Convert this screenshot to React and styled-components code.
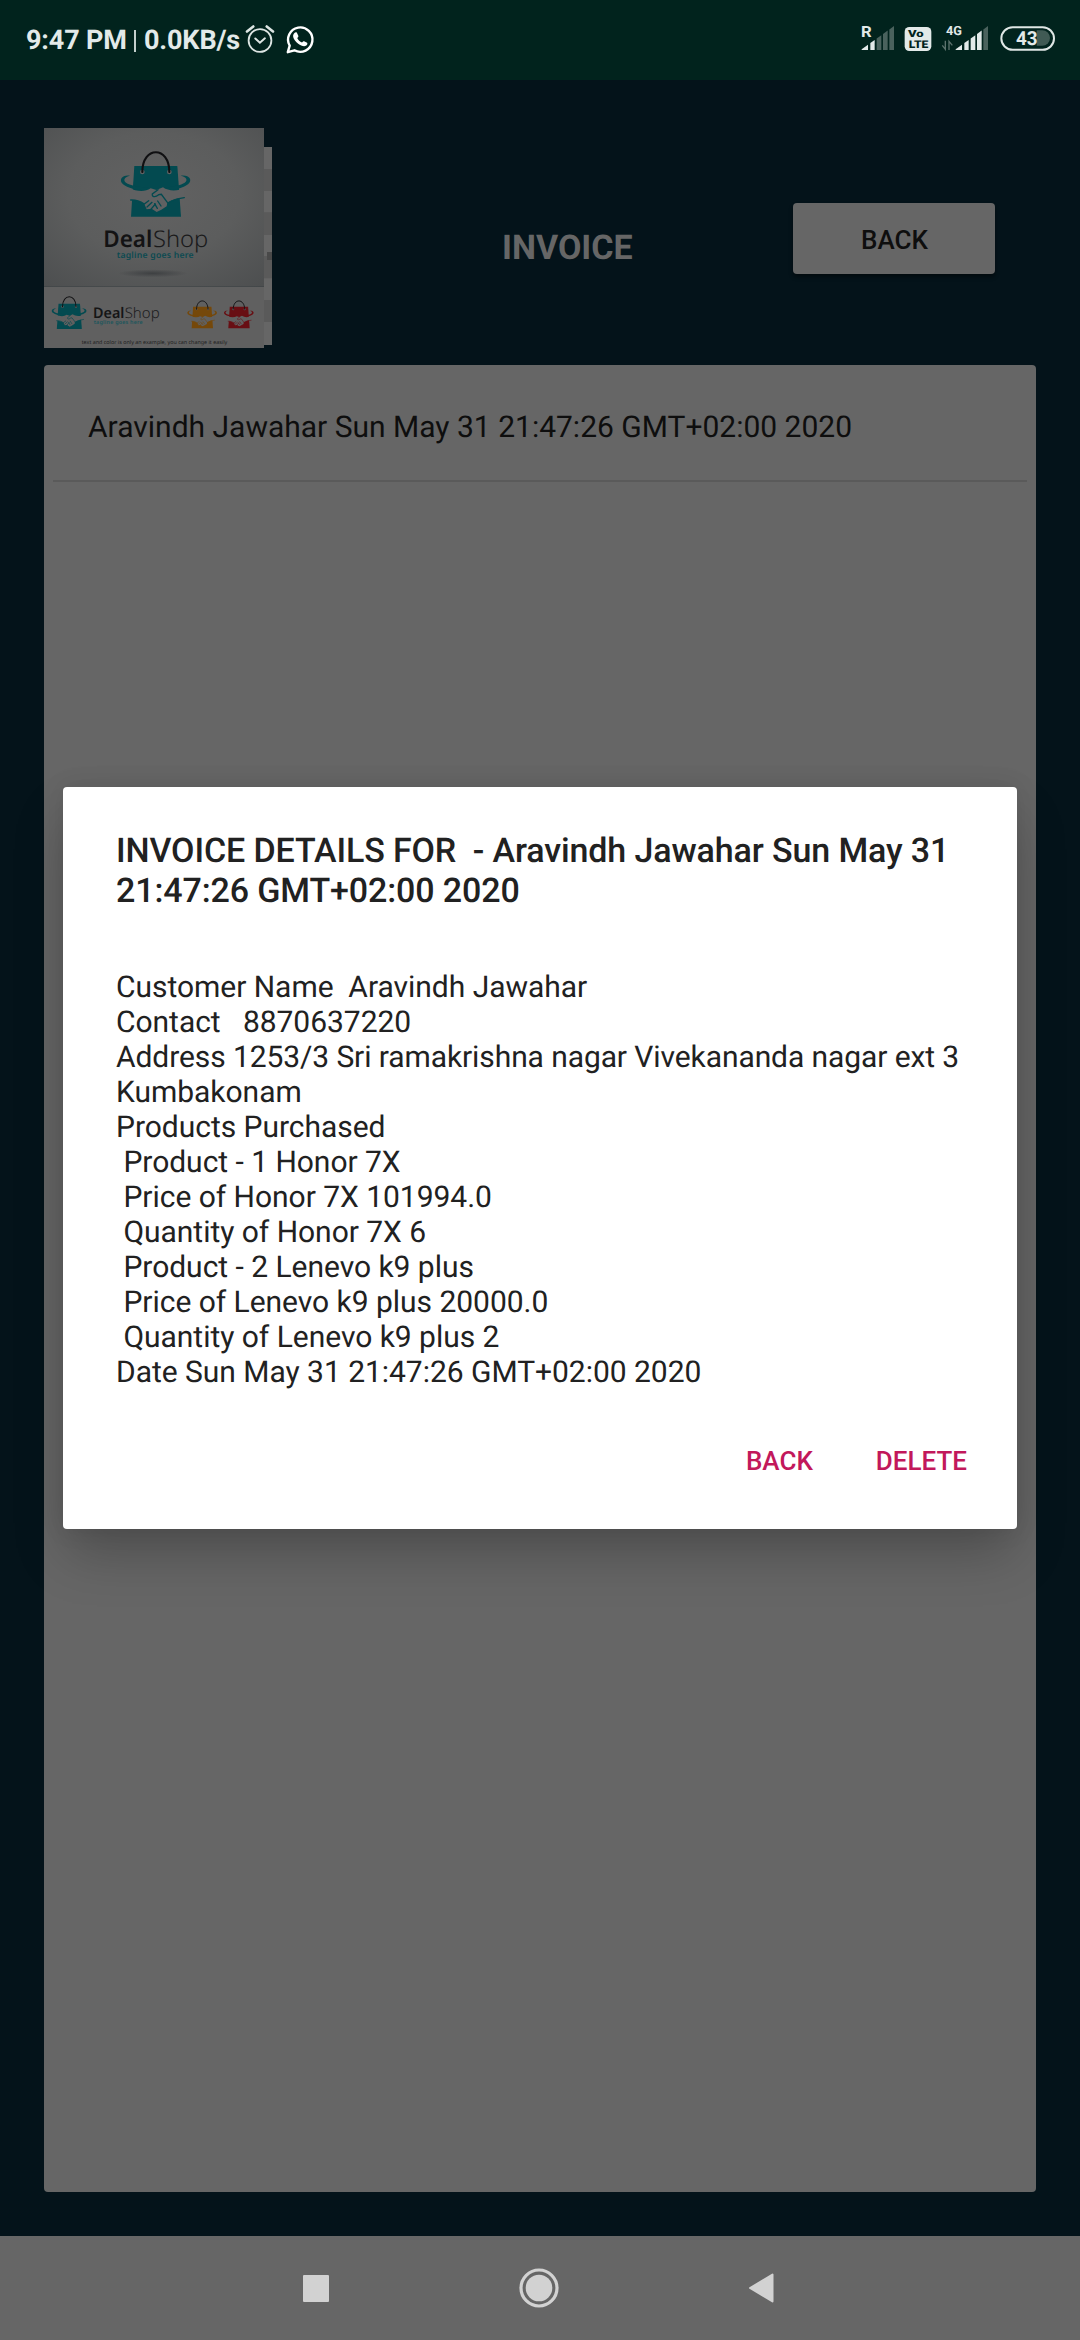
import React from "react";
import styled, { createGlobalStyle } from "styled-components";

const GlobalStyle = createGlobalStyle`
  * { box-sizing: border-box; }
  body {
    margin: 0;
    background: #04131a;
    font-family: Roboto, "Liberation Sans", sans-serif;
    text-rendering: geometricPrecision;
  }
`;

const Screen = styled.div`
  position: relative;
  width: 1080px;
  height: 2340px;
  display: grid;
  grid-template-rows: 80px 1fr 104px;
  background: #04131a;
  overflow: hidden;
`;

const StatusBar = styled.header`
  display: flex;
  justify-content: space-between;
  background: #01231d;
  color: #e3eae9;
`;

const StatusGroup = styled.div`
  display: flex;
  align-items: flex-start;
  padding: ${(p) => p.$padding};
`;

const StatusText = styled.span`
  width: ${(p) => p.$width}px;
  margin-left: ${(p) => p.$gap || 0}px;
  font-size: 27px;
  line-height: 32px;
  font-weight: 700;
  letter-spacing: -0.15px;
  white-space: nowrap;
`;

const StatusDivider = styled.i`
  width: 2px;
  height: 22px;
  margin: 6px 0 0 8px;
  background: #c3cfcc;
`;

const StatusIcon = styled.svg`
  display: block;
  flex: none;
  margin: ${(p) => p.$margin || "0"};
  font-family: Roboto, sans-serif;
  font-weight: 700;
`;

const Page = styled.main`
  display: flex;
  flex-direction: column;
  padding: 48px 44px 44px;
`;

const Header = styled.div`
  display: flex;
  align-items: flex-start;
  height: 237px;
`;

const Logo = styled.svg`
  display: block;
  flex: none;
  font-family: "Noto Sans", sans-serif;
`;

const Title = styled.h1`
  width: 129px;
  margin: 99px 162px 0 230px;
  font-size: 34px;
  line-height: 42px;
  font-weight: 700;
  white-space: nowrap;
  color: #666;
`;

const HeaderButton = styled.button`
  width: 202px;
  height: 71px;
  margin-top: 75px;
  padding: 3px 0 0 1px;
  border: 0;
  border-radius: 4px;
  background: #666;
  box-shadow: 0 3px 4px rgba(0, 0, 0, 0.45);
  font: 500 26px/32px Roboto, sans-serif;
  color: #0e0e0e;
`;

const Panel = styled.section`
  flex: 1;
  padding: 0 9px;
  border-radius: 4px;
  background: #666;
`;

const PanelRow = styled.div`
  height: 117px;
  padding: 45px 35px 0;
  border-bottom: 2px solid #5a5a5a;
  font-size: 30px;
  line-height: 36px;
  color: #0e0e0e;
  white-space: pre;
`;

const NavBar = styled.nav`
  display: flex;
  align-items: flex-start;
  background: #666;
`;

const NavIcon = styled.svg`
  display: block;
  flex: none;
  margin: ${(p) => p.$margin};
  fill: #d2d2d2;
`;

const Dialog = styled.div`
  position: absolute;
  left: 63px;
  top: 787px;
  width: 954px;
  height: 742px;
  padding: 44px 45px 0 53px;
  border-radius: 4px;
  background: #fff;
  color: #212121;
  box-shadow: 0 28px 50px -4px rgba(0, 0, 0, 0.24), 0 0 26px rgba(0, 0, 0, 0.09);
`;

const DialogTitle = styled.h2`
  height: 80px;
  margin: 0;
  font-size: 34px;
  line-height: 40px;
  font-weight: 500;
  letter-spacing: -0.12px;
  white-space: pre;
`;

const DialogBody = styled.div`
  margin-top: 59px;
  font-size: 30px;
  line-height: 35px;
  white-space: pre;
`;

const Line = styled.div`
  height: 35px;
  letter-spacing: ${(p) => (p.$tight ? "-0.09px" : "-0.03px")};
`;

const DialogActions = styled.div`
  display: flex;
  justify-content: flex-end;
  gap: 63px;
  margin-top: 53px;
  padding-right: 5px;
`;

const TextButton = styled.button`
  padding: 0;
  border: 0;
  background: none;
  font: 500 26px/36px Roboto, sans-serif;
  color: #c2185b;
`;

const invoiceName = "Aravindh Jawahar Sun May 31 21:47:26 GMT+02:00 2020";

const invoiceLines = [
  "Customer Name  Aravindh Jawahar",
  "Contact   8870637220",
  "Address 1253/3 Sri ramakrishna nagar Vivekananda nagar ext 3",
  "Kumbakonam",
  "Products Purchased",
  " Product - 1 Honor 7X",
  " Price of Honor 7X 101994.0",
  " Quantity of Honor 7X 6",
  " Product - 2 Lenevo k9 plus",
  " Price of Lenevo k9 plus 20000.0",
  " Quantity of Lenevo k9 plus 2",
  "Date Sun May 31 21:47:26 GMT+02:00 2020",
];

function AlarmIcon() {
  return (
    <StatusIcon $margin="0 0 0 6px" width="30" height="30" viewBox="0 0 30 30" fill="none" stroke="#dde5e3">
      <circle cx="15" cy="16.5" r="11.4" strokeWidth="1.8" />
      <path d="M10.3 14.5l4.6 4.2 5-4.4" strokeWidth="2" strokeLinecap="round" />
      <path d="M2 7.5l6.3-5M28 7.5l-6.3-5" strokeWidth="2.6" strokeLinecap="round" />
    </StatusIcon>
  );
}

function ChatIcon() {
  return (
    <StatusIcon $margin="0 0 0 10px" width="30" height="31" viewBox="0 0 30 31" fill="none">
      <path d="M2.8 28.2l1.9-6.5a12.2 12.2 0 1 1 4.7 4.6z" stroke="#fff" strokeWidth="2.4" strokeLinejoin="round" />
      <path
        d="M9.2 9.3c.8-1 2-1.3 2.7-.5l1.5 3.1c.1.6-.2 1-1.2 2.1 1 2.1 2.6 3.6 4.8 4.6 1-1.2 1.5-1.6 2.1-1.4l3 1.5c.8.8-.1 2.5-1.2 3.1-2 1.1-5.1-.2-7.7-2.1-2.5-1.9-4.5-4.5-5-6.7-.3-1.5.2-2.8 1-3.7z"
        fill="#fff"
      />
    </StatusIcon>
  );
}

/* Five bars rising under a slanted edge; the first `active` ones are lit. */
function SignalBars({ x, active }) {
  const bars = [[0, 19], [26, 13], [45, 14], [64, 14], [83, 14]];
  const edge = (v) => 148 - v * 0.72;
  return bars.map(([left, w], i) => (
    <path
      key={left}
      d={`M${x + left} 150V${edge(left)}L${x + left + w} ${edge(left + w)}V150z`}
      fill={i < active ? "#e3eae9" : "#4a625d"}
    />
  ));
}

function StatusIndicators() {
  return (
    <StatusIcon width="200" height="34" viewBox="120 66 600 102">
      <text x="123" y="111" fontSize="46" fill="#e3eae9" textLength="32" lengthAdjust="spacingAndGlyphs">R</text>
      <SignalBars x={125} active={2} />
      <rect x="254" y="81" width="80" height="72" rx="14" fill="#e3eae9" />
      <text x="264" y="112" fontSize="30" fontWeight="900" fill="#01231d" textLength="47" lengthAdjust="spacingAndGlyphs">Vo</text>
      <text x="266" y="144" fontSize="32" fontWeight="900" fill="#01231d" textLength="59" lengthAdjust="spacingAndGlyphs">LTE</text>
      <text x="378" y="105" fontSize="38" fill="#e3eae9" textLength="48" lengthAdjust="spacingAndGlyphs">4G</text>
      <path d="M376 122V148L367 136M387 150V124L397 136" fill="none" stroke="#5c726d" strokeWidth="4" />
      <SignalBars x={407} active={4} />
      <path d="M650 91H667A23 23 0 0 1 667 137H650z" fill="#405a54" />
      <rect x="544" y="81.5" width="158" height="68" rx="34" fill="none" stroke="#dfe7e5" strokeWidth="6" />
      <text x="588" y="135" fontSize="58" fill="#e3eae9" textLength="65" lengthAdjust="spacingAndGlyphs">43</text>
    </StatusIcon>
  );
}

function BagMark({ color, hand, transform }) {
  return (
    <g transform={transform}>
      <path d="M313 153H442L453 305H303z" fill={color} />
      <path d="M300 182C278 178 264 194 279 208C292 219 320 226 348 226L355 217C325 216 299 211 288 203C278 195 284 186 300 182z" fill={color} />
      <path d="M452 182C476 178 490 194 474 208C460 219 433 226 406 226L400 217C428 216 454 210 464 203C475 195 469 186 452 182z" fill={color} />
      <path d="M296 219C322 230 345 231 362 220L379 225L399 217C416 230 445 228 466 219L461 247C442 249 426 256 412 263L410 274L394 284L380 291L365 281L350 283L343 267C329 258 314 255 300 255z" fill={hand} />
      <path d="M302 255C318 254 332 260 343 267M463 248C443 250 428 256 413 264M384 224L367 237C365 246 376 248 386 239L394 238L412 262M383 258L393 273M374 266L382 280M343 267L356 257M351 276L366 262M362 284L376 267" fill="none" stroke={color} strokeWidth="4" strokeLinecap="round" />
      <circle cx="337" cy="171" r="7" fill={hand} />
      <circle cx="418" cy="171" r="7" fill={hand} />
      <path d="M337 171C337 92 418 92 418 171" fill="none" stroke="#101012" strokeWidth="6.5" strokeLinecap="round" />
    </g>
  );
}

function ShopLogo() {
  return (
    <Logo width="228" height="220" viewBox="42 39 684 660">
      <defs>
        <radialGradient id="backdrop" cx="0.5" cy="0.42" r="0.78">
          <stop offset="0" stopColor="#626262" />
          <stop offset="0.5" stopColor="#5c5d5d" />
          <stop offset="1" stopColor="#4c4e4f" />
        </radialGradient>
        <radialGradient id="ground">
          <stop offset="0" stopColor="#3e4042" />
          <stop offset="1" stopColor="#3e4042" stopOpacity="0" />
        </radialGradient>
      </defs>
      <rect x="702" y="96" width="24" height="594" fill="#666" />
      <path d="M702 162h24v66h-24zM702 292h24v68h-24zM702 423h24v67h-24zM702 555h24v66h-24z" fill="#5a5a5a" />
      <path d="M711 411h15v24h-15z" fill="#494949" />
      <rect x="42" y="39" width="660" height="476" fill="url(#backdrop)" />
      <rect x="42" y="515" width="660" height="184" fill="#606060" />
      <ellipse cx="368" cy="475" rx="105" ry="12" fill="url(#ground)" />
      <BagMark color="#034a50" hand="#606162" />
      <text x="220" y="397" fontSize="69" fontWeight="600" fill="#131314" textLength="147" lengthAdjust="spacingAndGlyphs">Deal</text>
      <text x="369" y="397" fontSize="69" fontWeight="300" fill="#1a1a1b" textLength="166" lengthAdjust="spacingAndGlyphs">Shop</text>
      <text x="260" y="430" fontSize="26" fontWeight="600" fill="#0b4a51" textLength="231">tagline goes here</text>
      <BagMark color="#034a50" hand="#606060" transform="translate(-71 489.5) scale(0.5)" />
      <text x="189" y="608" fontSize="44" fontWeight="600" fill="#151516" textLength="94" lengthAdjust="spacingAndGlyphs">Deal</text>
      <text x="284" y="608" fontSize="44" fontWeight="300" fill="#1c1c1d" textLength="105" lengthAdjust="spacingAndGlyphs">Shop</text>
      <text x="191" y="628" fontSize="16" fontWeight="600" fill="#1c565c" textLength="147">tagline goes here</text>
      <BagMark color="#75480a" hand="#606060" transform="translate(355.6 509.8) scale(0.427)" />
      <BagMark color="#680e13" hand="#606060" transform="translate(465.6 509.8) scale(0.427)" />
      <text x="155" y="687" fontSize="16" fill="#1d1d1d" textLength="437">text and color is only an example, you can change it easily</text>
    </Logo>
  );
}

export default function App() {
  return (
    <>
      <GlobalStyle />
      <Screen>
        <StatusBar>
          <StatusGroup $padding="24px 0 0 26px">
            <StatusText $width={100}>9:47 PM</StatusText>
            <StatusDivider />
            <StatusText $width={95} $gap={8}>0.0KB/s</StatusText>
            <AlarmIcon />
            <ChatIcon />
          </StatusGroup>
          <StatusGroup $padding="22px 20px 0 0">
            <StatusIndicators />
          </StatusGroup>
        </StatusBar>

        <Page>
          <Header>
            <ShopLogo />
            <Title>INVOICE</Title>
            <HeaderButton>BACK</HeaderButton>
          </Header>
          <Panel>
            <PanelRow>{invoiceName}</PanelRow>
          </Panel>
        </Page>

        <NavBar>
          <NavIcon $margin="39px 0 0 303px" width="26" height="27" viewBox="0 0 26 27">
            <rect width="26" height="27" rx="1" />
          </NavIcon>
          <NavIcon $margin="32px 0 0 190px" width="40" height="40" viewBox="0 0 40 40">
            <circle cx="20" cy="20" r="18" fill="none" stroke="#d2d2d2" strokeWidth="3.2" />
            <circle cx="20" cy="20" r="13.3" />
          </NavIcon>
          <NavIcon $margin="37px 0 0 189px" width="26" height="30" viewBox="0 0 26 30">
            <path d="M24.5 1.5V28.5L2 15z" stroke="#d2d2d2" strokeWidth="2" strokeLinejoin="round" />
          </NavIcon>
        </NavBar>

        <Dialog role="dialog">
          <DialogTitle>
            {"INVOICE DETAILS FOR  - Aravindh Jawahar Sun May 31\n21:47:26 GMT+02:00 2020"}
          </DialogTitle>
          <DialogBody>
            {invoiceLines.map((line) => (
              <Line key={line} $tight={line.length > 50}>{line}</Line>
            ))}
          </DialogBody>
          <DialogActions>
            <TextButton>BACK</TextButton>
            <TextButton>DELETE</TextButton>
          </DialogActions>
        </Dialog>
      </Screen>
    </>
  );
}
